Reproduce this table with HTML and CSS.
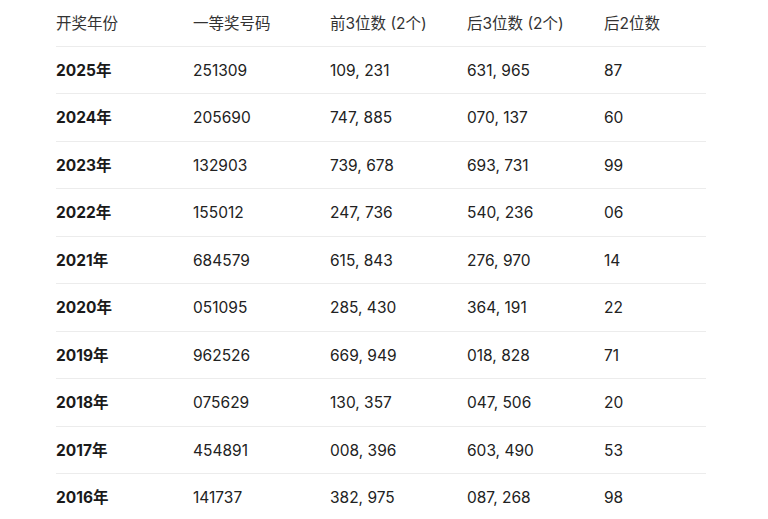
FILE: index.html
```html
<!DOCTYPE html>
<html lang="zh">
<head>
<meta charset="utf-8">
<link rel="stylesheet" href="styles.css">
</head>
<body>
<table class="draw">
<thead>
<tr><th class="c1">开奖年份</th><th class="c2">一等奖号码</th><th class="c3">前3位数 (2个)</th><th class="c4">后3位数 (2个)</th><th class="c5">后2位数</th></tr>
</thead>
<tbody>
<tr><td class="year">2025年</td><td>251309</td><td>109, 231</td><td>631, 965</td><td>87</td></tr>
<tr><td class="year">2024年</td><td>205690</td><td>747, 885</td><td>070, 137</td><td>60</td></tr>
<tr><td class="year">2023年</td><td>132903</td><td>739, 678</td><td>693, 731</td><td>99</td></tr>
<tr><td class="year">2022年</td><td>155012</td><td>247, 736</td><td>540, 236</td><td>06</td></tr>
<tr><td class="year">2021年</td><td>684579</td><td>615, 843</td><td>276, 970</td><td>14</td></tr>
<tr><td class="year">2020年</td><td>051095</td><td>285, 430</td><td>364, 191</td><td>22</td></tr>
<tr><td class="year">2019年</td><td>962526</td><td>669, 949</td><td>018, 828</td><td>71</td></tr>
<tr><td class="year">2018年</td><td>075629</td><td>130, 357</td><td>047, 506</td><td>20</td></tr>
<tr><td class="year">2017年</td><td>454891</td><td>008, 396</td><td>603, 490</td><td>53</td></tr>
<tr><td class="year">2016年</td><td>141737</td><td>382, 975</td><td>087, 268</td><td>98</td></tr>
</tbody>
</table>
</body>
</html>
```

FILE: styles.css
```css
html, body {
  margin: 0;
  padding: 0;
  background: #ffffff;
}
body {
  font-family: Inter, "Noto Sans CJK SC", sans-serif;
  color: #222222;
  font-size: 15.5px;
  overflow: hidden;
}
.draw {
  border-collapse: collapse;
  margin-left: 56px;
  margin-top: 0;
  width: 650px;
  table-layout: fixed;
}
.draw th,
.draw td {
  text-align: left;
  padding: 13px 0 11px;
  line-height: 22.5px;
  vertical-align: middle;
}
.draw th {
  font-weight: 400;
  color: #333333;
  padding: 13px 0 10px;
  border-bottom: 1px solid #ececec;
}
.draw td {
  border-bottom: 1px solid #ececec;
}
.draw tbody tr:last-child td {
  border-bottom: none;
}
.c1, .c2, .c3, .c4 { width: 137px; }
.c5 { width: 102px; }
.year {
  font-weight: 700;
  color: #1a1a1a;
}
```
